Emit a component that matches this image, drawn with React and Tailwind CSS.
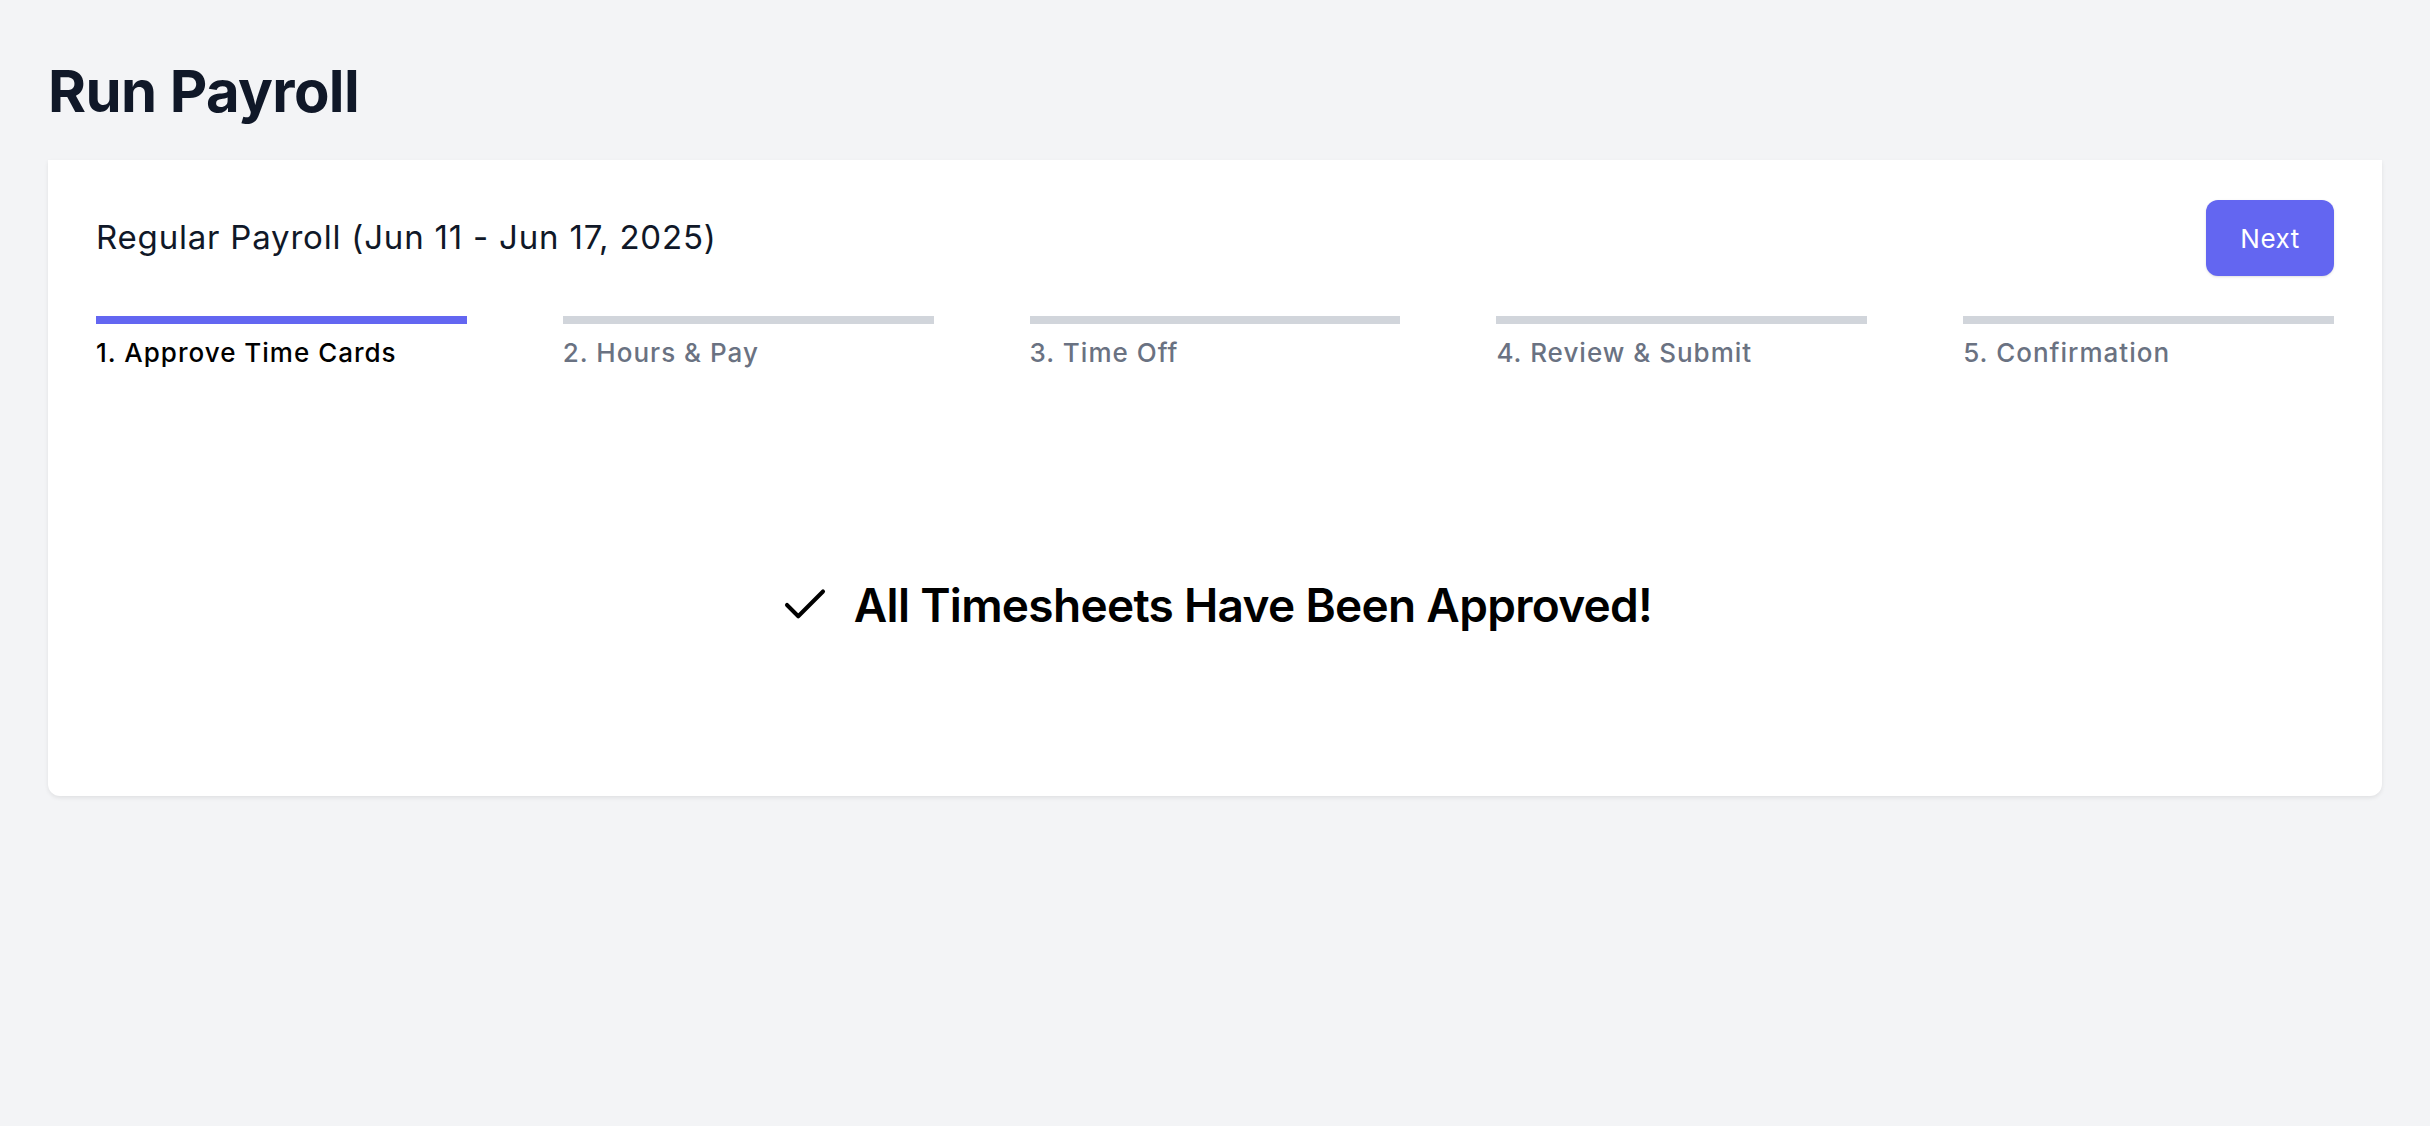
import { Check } from "lucide-react";

const steps = [
  "1. Approve Time Cards",
  "2. Hours & Pay",
  "3. Time Off",
  "4. Review & Submit",
  "5. Confirmation",
];

export default function App() {
  const current = 0;

  return (
    <div className="min-h-screen bg-[#f3f4f6] px-12 pt-12 font-['Inter',sans-serif]">
      <h1 className="mb-[25px] text-[58px] font-bold leading-[1.5] tracking-[-0.6px] text-gray-900">
        Run Payroll
      </h1>

      <div className="rounded-b-[12px] bg-white px-12 pt-10 pb-12 shadow-[0_2px_4px_rgba(0,0,0,0.08)]">
        {/* Header */}
        <div className="flex items-center justify-between">
          <h2 className="text-[33px] leading-[1.5] tracking-[0.8px] text-gray-900">
            Regular Payroll (Jun 11 - Jun 17, 2025)
          </h2>
          <button className="h-[76px] w-[128px] rounded-[12px] bg-[#6366f1] text-[26px] tracking-[0.5px] text-white shadow-sm">
            Next
          </button>
        </div>

        {/* Steps */}
        <div className="mt-10 grid grid-cols-5 gap-[96px]">
          {steps.map((step, i) => (
            <div key={step}>
              <div
                className={
                  i === current ? "h-2 bg-[#6366f1]" : "h-2 bg-[#d1d5db]"
                }
              />
              <p
                className={
                  i === current
                    ? "mt-[10px] text-[26px] font-medium leading-[1.45] tracking-[1px] text-black"
                    : "mt-[10px] text-[26px] font-medium leading-[1.45] tracking-[1px] text-gray-500"
                }
              >
                {step}
              </p>
            </div>
          ))}
        </div>

        {/* Status */}
        <div className="flex items-center justify-center gap-[22px] pt-[199px] pb-[108px]">
          <Check size={54} strokeWidth={1.8} className="text-black" />
          <span className="text-[46px] font-semibold leading-[1.5] tracking-[-0.7px] text-black">
            All Timesheets Have Been Approved!
          </span>
        </div>
      </div>
    </div>
  );
}
